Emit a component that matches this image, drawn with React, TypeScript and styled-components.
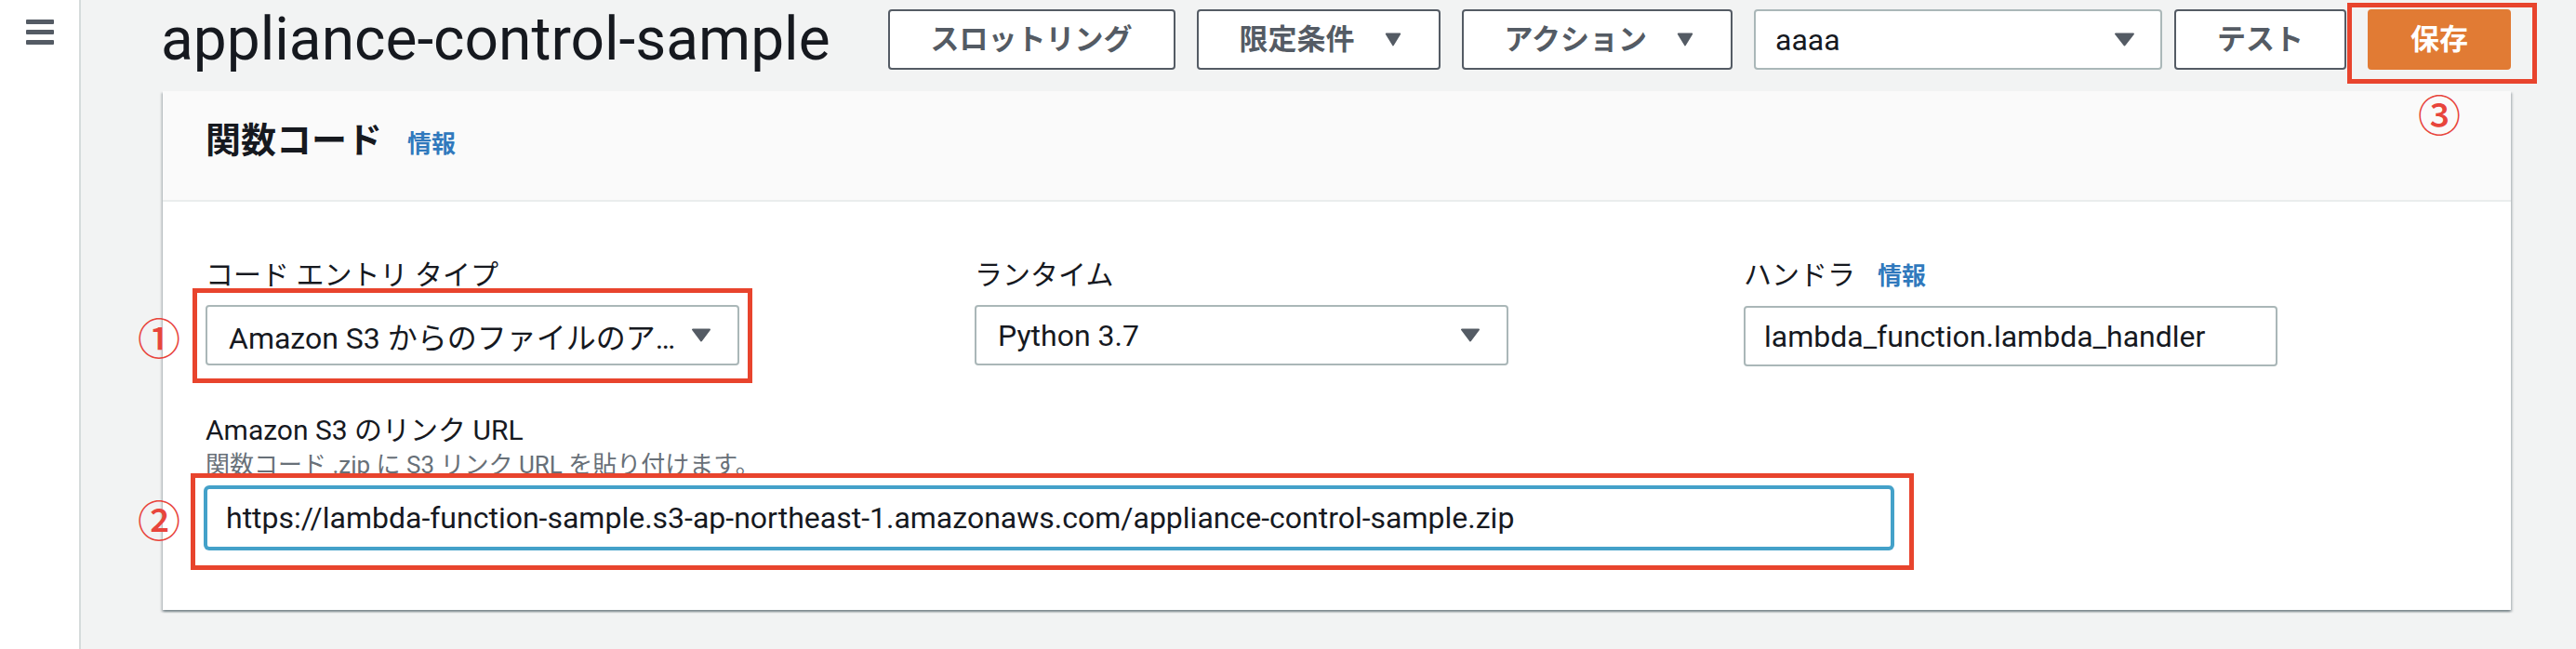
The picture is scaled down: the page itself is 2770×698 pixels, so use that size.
import React from "react";
import styled, { createGlobalStyle } from "styled-components";

const GlobalStyle = createGlobalStyle`
  html, body { margin: 0; padding: 0; background: #f2f3f3; }
  body {
    font-family: Roboto, "Noto Sans CJK JP", sans-serif;
    color: #16191f;
  }
  *, *::before, *::after { box-sizing: border-box; }
`;

const Shell = styled.div`
  display: flex;
  min-height: 698px;
  background: #f2f3f3;
`;

const Sidebar = styled.aside`
  width: 87px;
  flex: none;
  background: #ffffff;
  border-right: 2px solid #d5dbdb;
  display: flex;
  justify-content: center;
  align-items: flex-start;
  padding-top: 21px;
`;

const MenuSvg = styled.svg`
  display: block;
`;

const Main = styled.main`
  flex: 1;
  min-width: 0;
  padding: 10px 70px 0 88px;
`;

const PageHeader = styled.header`
  display: flex;
  align-items: center;
  justify-content: space-between;
  height: 65px;
`;

const Title = styled.h1`
  margin: 0 0 0 -2px;
  font-family: Roboto, sans-serif;
  font-size: 64px;
  font-weight: 400;
  line-height: 65px;
  color: #16191f;
  white-space: nowrap;
`;

const Toolbar = styled.div`
  display: flex;
  align-items: stretch;
  gap: 23px;
  height: 65px;
`;

const ToolGroup = styled.div`
  display: flex;
  align-items: stretch;
  gap: 13px;
`;

const Button = styled.button<{ $primary?: boolean; $caret?: boolean }>`
  height: 65px;
  display: inline-flex;
  align-items: center;
  gap: 32px;
  padding: 0 ${(p) => (p.$caret ? "40px" : "44px")} 0 44px;
  border: 2px solid ${(p) => (p.$primary ? "#e17b34" : "#545b64")};
  border-radius: 4px;
  background: ${(p) => (p.$primary ? "#e17b34" : "#ffffff")};
  color: ${(p) => (p.$primary ? "#ffffff" : "#545b64")};
  font-family: Roboto, "Noto Sans CJK JP", sans-serif;
  font-size: 31px;
  font-weight: 700;
  line-height: 1;
  white-space: nowrap;
  cursor: pointer;
`;

const AliasSelect = styled.div`
  width: 439px;
  height: 65px;
  display: flex;
  align-items: center;
  justify-content: space-between;
  padding: 0 27px 0 21px;
  border: 2px solid #aab7b8;
  border-radius: 4px;
  background: #ffffff;
  font-size: 32px;
  color: #16191f;
`;

const CaretSvg = styled.svg`
  display: block;
  flex: none;
`;

const Panel = styled.section`
  margin-top: 23px;
  background: #ffffff;
  box-shadow: 0 2px 2px 0 rgba(0, 28, 36, 0.3),
    2px 2px 2px 0 rgba(0, 28, 36, 0.15),
    -2px 2px 2px 0 rgba(0, 28, 36, 0.15);
`;

const PanelHeader = styled.div`
  height: 119px;
  display: flex;
  align-items: baseline;
  gap: 27px;
  padding: 30px 46px 0;
  background: #fafafa;
  border-bottom: 2px solid #eaeded;
`;

const PanelTitle = styled.h2`
  margin: 0;
  font-size: 38px;
  font-weight: 700;
  line-height: 46px;
  color: #16191f;
`;

const InfoLink = styled.a<{ $size: number }>`
  color: #3079bd;
  font-size: ${(p) => p.$size}px;
  font-weight: 700;
  text-decoration: none;
  cursor: pointer;
`;

const PanelBody = styled.div`
  padding: 59px 46px 66px;
`;

const FieldGrid = styled.div`
  display: grid;
  grid-template-columns: repeat(3, 574px);
  column-gap: 253px;
`;

const Field = styled.div<{ $top?: number }>`
  display: flex;
  flex-direction: column;
  margin-top: ${(p) => p.$top ?? 0}px;
`;

const Label = styled.label<{ $lh?: number; $gapBelow?: number }>`
  display: flex;
  align-items: baseline;
  gap: 24px;
  font-size: 30px;
  font-weight: 400;
  line-height: ${(p) => p.$lh ?? 40}px;
  color: #16191f;
  margin-bottom: ${(p) => p.$gapBelow ?? 12}px;
`;

const Description = styled.div`
  font-size: 26px;
  line-height: 36px;
  color: #687078;
  margin-bottom: 6px;
`;

const SelectBox = styled.div`
  width: 574px;
  height: 65px;
  display: flex;
  align-items: center;
  gap: 14px;
  padding: 0 28px 0 23px;
  border: 2px solid #aab7b8;
  border-radius: 4px;
  background: #ffffff;
  font-size: 32px;
  color: #16191f;
`;

const SelectText = styled.span`
  flex: 1;
  min-width: 0;
  overflow: hidden;
  white-space: nowrap;
  text-overflow: ellipsis;
`;

const TextInput = styled.input<{ $focused?: boolean; $width: number; $height: number }>`
  display: block;
  width: ${(p) => p.$width}px;
  height: ${(p) => p.$height}px;
  padding: 0 20px;
  border: 2px solid ${(p) => (p.$focused ? "#44a1c9" : "#aab7b8")};
  border-radius: 4px;
  box-shadow: ${(p) => (p.$focused ? "0 0 0 2px #44a1c9" : "none")};
  background: #ffffff;
  font-family: Roboto, "Noto Sans CJK JP", sans-serif;
  font-size: 32px;
  color: #16191f;
  outline: none;
`;

const Annotated = styled.div`
  position: relative;
  display: flex;
  width: max-content;
`;

const Frame = styled.span<{ $t: number; $r: number; $b: number; $l: number }>`
  position: absolute;
  top: ${(p) => -p.$t}px;
  right: ${(p) => -p.$r}px;
  bottom: ${(p) => -p.$b}px;
  left: ${(p) => -p.$l}px;
  border: 5px solid #e8442d;
  pointer-events: none;
`;

const Marker = styled.span<{ $place: "left" | "below" }>`
  position: absolute;
  z-index: 2;
  font-family: "Noto Sans CJK JP", sans-serif;
  font-size: 46px;
  font-weight: 500;
  line-height: 46px;
  color: #e8453c;
  ${(p) =>
    p.$place === "left"
      ? `right: calc(100% + 27px); top: 50%; transform: translateY(-50%);`
      : `left: 50%; top: calc(100% + 23px); transform: translateX(-50%);`}
`;

const Caret = ({ w = 22, h = 15 }: { w?: number; h?: number }) => (
  <CaretSvg width={w} height={h} viewBox="0 0 22 15" preserveAspectRatio="none" aria-hidden>
    <path
      d="M2 1.5 H20 L11 13.5 Z"
      fill="#545b64"
      stroke="#545b64"
      strokeWidth="2"
      strokeLinejoin="round"
    />
  </CaretSvg>
);

const MenuIcon = () => (
  <MenuSvg width="30" height="27" viewBox="0 0 30 27" aria-hidden>
    <rect x="0" y="0" width="30" height="5" rx="1" fill="#545b64" />
    <rect x="0" y="11" width="30" height="5" rx="1" fill="#545b64" />
    <rect x="0" y="22" width="30" height="5" rx="1" fill="#545b64" />
  </MenuSvg>
);

export default function App() {
  return (
    <>
      <GlobalStyle />
      <Shell>
        <Sidebar>
          <MenuIcon />
        </Sidebar>
        <Main>
          <PageHeader>
            <Title>appliance-control-sample</Title>
            <Toolbar>
              <Button>スロットリング</Button>
              <Button $caret>
                限定条件
                <Caret w={18} h={15} />
              </Button>
              <Button $caret>
                アクション
                <Caret w={18} h={15} />
              </Button>
              <ToolGroup>
                <AliasSelect>
                  <span>aaaa</span>
                  <Caret w={23} h={15} />
                </AliasSelect>
                <Button>テスト</Button>
              </ToolGroup>
              <Annotated>
                <Button $primary>保存</Button>
                <Frame $t={7} $r={28} $b={15} $l={22} />
                <Marker $place="below">③</Marker>
              </Annotated>
            </Toolbar>
          </PageHeader>

          <Panel>
            <PanelHeader>
              <PanelTitle>関数コード</PanelTitle>
              <InfoLink $size={26}>情報</InfoLink>
            </PanelHeader>
            <PanelBody>
              <FieldGrid>
                <Field>
                  <Label>コード エントリ タイプ</Label>
                  <Annotated>
                    <SelectBox>
                      <SelectText>Amazon S3 からのファイルのアップロード</SelectText>
                      <Caret />
                    </SelectBox>
                    <Frame $t={18} $r={14} $b={19} $l={14} />
                    <Marker $place="left">①</Marker>
                  </Annotated>
                </Field>
                <Field>
                  <Label>ランタイム</Label>
                  <SelectBox>
                    <SelectText>Python 3.7</SelectText>
                    <Caret />
                  </SelectBox>
                </Field>
                <Field>
                  <Label>
                    ハンドラ
                    <InfoLink $size={26}>情報</InfoLink>
                  </Label>
                  <TextInput
                    $width={574}
                    $height={65}
                    readOnly
                    value="lambda_function.lambda_handler"
                  />
                </Field>
              </FieldGrid>

              <Field $top={50}>
                <Label $lh={38} $gapBelow={0}>Amazon S3 のリンク URL</Label>
                <Description>関数コード .zip に S3 リンク URL を貼り付けます。</Description>
                <Annotated>
                  <TextInput
                    $focused
                    $width={1814}
                    $height={66}
                    readOnly
                    value="https://lambda-function-sample.s3-ap-northeast-1.amazonaws.com/appliance-control-sample.zip"
                  />
                  <Frame $t={15} $r={23} $b={23} $l={16} />
                  <Marker $place="left">②</Marker>
                </Annotated>
              </Field>
            </PanelBody>
          </Panel>
        </Main>
      </Shell>
    </>
  );
}
